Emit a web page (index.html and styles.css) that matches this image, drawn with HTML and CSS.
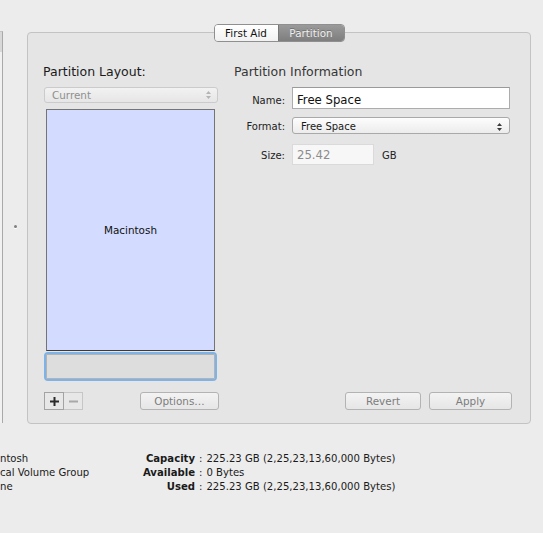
FILE: index.html
```html
<!DOCTYPE html>
<html>
<head>
<meta charset="utf-8">
<title>Partition</title>
<link rel="stylesheet" href="styles.css">
</head>
<body>
<div class="window">
  <div class="main">
    <aside class="sidebar"><div class="sidebar-head"></div></aside>
    <div class="splitter"><span class="grip"></span></div>
    <section class="group">
      <div class="tabs">
        <span class="tab tab-first">First Aid</span>
        <span class="tab tab-active">Partition</span>
      </div>
      <div class="panes">
        <div class="layout-col">
          <h2 class="heading heading-left">Partition Layout:</h2>
          <div class="popup popup-disabled">
            <span>Current</span>
            <svg class="stepper" width="5" height="8" viewBox="0 0 5 8"><path d="M2.5 0 L5 3 L0 3 Z M0 5 L5 5 L2.5 8 Z" fill="#b4b4b4"/></svg>
          </div>
          <div class="map"><span>Macintosh</span></div>
          <div class="selbox"><div class="selbox-inner"></div></div>
        </div>
        <div class="info-col">
          <h2 class="heading heading-right">Partition Information</h2>
          <div class="form">
            <label class="label">Name:</label>
            <div class="field field-name">Free Space</div>
            <label class="label">Format:</label>
            <div class="popup popup-format">
              <span>Free Space</span>
              <svg class="stepper" width="5" height="8" viewBox="0 0 5 8"><path d="M2.5 0 L5 3 L0 3 Z M0 5 L5 5 L2.5 8 Z" fill="#3c3c3c"/></svg>
            </div>
            <label class="label">Size:</label>
            <div class="size-row">
              <div class="field field-size">25.42</div>
              <span class="unit">GB</span>
            </div>
          </div>
        </div>
      </div>
      <div class="footer">
        <div class="footer-left">
          <div class="plusminus">
            <span class="pm pm-plus"><svg width="9" height="9" viewBox="0 0 9 9"><rect x="3.5" y="0" width="2" height="9" fill="#2a2a2a"/><rect x="0" y="3.5" width="9" height="2" fill="#2a2a2a"/></svg></span>
            <span class="pm pm-minus"><svg width="9" height="9" viewBox="0 0 9 9"><rect x="0" y="3.5" width="9" height="2" fill="#a8a8a8"/></svg></span>
          </div>
          <span class="button btn-options">Options…</span>
        </div>
        <div class="footer-right">
          <span class="button btn-revert">Revert</span>
          <span class="button btn-apply">Apply</span>
        </div>
      </div>
    </section>
  </div>
  <div class="details">
    <span class="frag">ntosh</span><span class="dlabel">Capacity</span><span class="colon">:</span><span class="dvalue">225.23 GB (2,25,23,13,60,000 Bytes)</span>
    <span class="frag">cal Volume Group</span><span class="dlabel">Available</span><span class="colon">:</span><span class="dvalue">0 Bytes</span>
    <span class="frag">ne</span><span class="dlabel">Used</span><span class="colon">:</span><span class="dvalue">225.23 GB (2,25,23,13,60,000 Bytes)</span>
  </div>
</div>
</body>
</html>
```
FILE: styles.css
```css
* { box-sizing: border-box; }
html, body { margin: 0; padding: 0; }
body {
  background: #ececec;
  font-family: "DejaVu Sans", "Noto Sans", sans-serif;
  color: #1c1c1c;
}
.window {
  width: 543px;
  height: 533px;
  overflow: hidden;
}
.main {
  display: flex;
  align-items: flex-start;
}
.sidebar {
  width: 3px;
  height: 392px;
  margin-top: 31px;
  background: #f1f1f1;
  border-right: 1px solid #a9a9a9;
  border-top: 1px solid #c4c4c4;
}
.sidebar-head {
  height: 20px;
  background: #d8d8d8;
}
.splitter {
  width: 24px;
  height: 392px;
  margin-top: 31px;
  padding-bottom: 2px;
  display: flex;
  align-items: center;
  justify-content: center;
}
.grip {
  width: 3px;
  height: 3px;
  border-radius: 50%;
  background: #7e7e7e;
  box-shadow: 0 1px 0 #fff;
}
.group {
  width: 504px;
  height: 392px;
  margin-top: 32px;
  background: #e5e5e5;
  border: 1px solid #c3c3c3;
  border-radius: 4px;
  display: flex;
  flex-direction: column;
  padding: 0 20px 0 16px;
}
.tabs {
  align-self: center;
  margin-top: -9px;
  margin-left: 4px;
  display: flex;
  height: 18px;
  border: 1px solid #8f8f8f;
  border-radius: 4px;
  overflow: hidden;
  font-size: 10.4px;
}
.tab {
  height: 16px;
  line-height: 16px;
  text-align: center;
}
.tab-first {
  width: 63px;
  background: linear-gradient(#ffffff, #f1f1f1);
  color: #111;
}
.tab-active {
  width: 66px;
  background: linear-gradient(#9a9a9a, #7e7e7e);
  color: #efefef;
  border-left: 1px solid #777;
  text-shadow: 0 -1px 0 rgba(0,0,0,0.25);
}
.panes {
  display: flex;
  gap: 15px;
  margin-top: 22px;
}
.layout-col {
  width: 175px;
  display: flex;
  flex-direction: column;
}
.info-col {
  flex: 1;
  display: flex;
  flex-direction: column;
}
.heading {
  margin: 0;
  font-size: 12.5px;
  line-height: 15px;
  font-weight: normal;
  margin-left: -1px;
}
.heading-left { color: #1a1a1a; }
.heading-right { color: #363636; margin-left: 0; }
.popup {
  display: flex;
  align-items: center;
  justify-content: space-between;
  border: 1px solid #b5b5b5;
  border-radius: 3px;
  background: linear-gradient(#fdfdfd, #ececec);
  font-size: 10.4px;
}
.popup-disabled {
  width: 174px;
  height: 16px;
  margin-top: 8px;
  padding: 0 6px 0 7px;
  line-height: 14px;
  color: #8f8f8f;
  border-color: #cbcbcb;
  background: linear-gradient(#f2f2f2, #e6e6e6);
}
.map {
  width: 169px;
  height: 242px;
  margin-top: 6px;
  margin-left: 2px;
  background: #d3dcfe;
  border: 1px solid #747474;
  border-bottom-color: #3a3a3a;
  display: flex;
  align-items: center;
  justify-content: center;
  font-size: 10.4px;
  line-height: 12px;
  color: #111;
}
.selbox {
  width: 173px;
  height: 29px;
  margin-top: 1px;
  border: 2px solid #7db3e6;
  border-radius: 4px;
}
.selbox-inner {
  height: 100%;
  background: #dddddd;
  border: 1px solid #b3b3b3;
}
.form {
  margin-top: 8px;
  display: grid;
  grid-template-columns: 51px 1fr;
  column-gap: 7px;
  align-items: baseline;
}
.label {
  text-align: right;
  font-size: 10px;
  color: #222;
}
.field {
  height: 22px;
  border: 1px solid #acacac;
  border-top-color: #9a9a9a;
  background: #fff;
  font-size: 11.7px;
  line-height: 17px;
  padding: 4px 4px 0;
}
.field-name {
  width: 218px;
  color: #111;
}
.popup-format {
  width: 218px;
  height: 17px;
  margin-top: 8px;
  padding: 2px 7px 0 8px;
  line-height: 14px;
  font-size: 10px;
  color: #1a1a1a;
  border-color: #a9a9a9;
}
.size-row {
  display: flex;
  align-items: baseline;
  gap: 8px;
  margin-top: 10px;
}
.field-size {
  width: 82px;
  height: 21px;
  padding-top: 2px;
  background: #f7f7f7;
  border: 1px solid #dadada;
  color: #8c8c8c;
}
.unit {
  font-size: 10px;
  color: #222;
}
.stepper { display: block; }
.footer {
  margin-top: 11px;
  margin-right: -2px;
  display: flex;
  justify-content: space-between;
}
.footer-left {
  width: 175px;
  display: flex;
  justify-content: space-between;
}
.footer-right {
  display: flex;
  gap: 8px;
}
.plusminus {
  display: flex;
  height: 18px;
}
.pm {
  width: 19px;
  height: 18px;
  display: flex;
  align-items: center;
  justify-content: center;
  background: #e7e7e7;
}
.pm-plus {
  border: 1px solid #a3a3a3;
  width: 20px;
}
.pm-minus {
  border: 1px solid #c6c6c6;
  border-left: none;
}
.button {
  height: 18px;
  border: 1px solid #b3b3b3;
  border-radius: 3px;
  background: linear-gradient(#f3f3f3, #e6e6e6);
  font-size: 10.4px;
  line-height: 16px;
  text-align: center;
  color: #7c7c7c;
}
.btn-options { width: 79px; }
.btn-revert { width: 76px; }
.btn-apply { width: 83px; }
.details {
  margin-top: 28px;
  display: grid;
  grid-template-columns: 126px 65px auto 1fr;
  column-gap: 4px;
  font-size: 10.1px;
  line-height: 14px;
  color: #1a1a1a;
}
.frag { white-space: nowrap; }
.dlabel {
  text-align: right;
  font-weight: bold;
  white-space: nowrap;
}
.dvalue { white-space: nowrap; }
```
